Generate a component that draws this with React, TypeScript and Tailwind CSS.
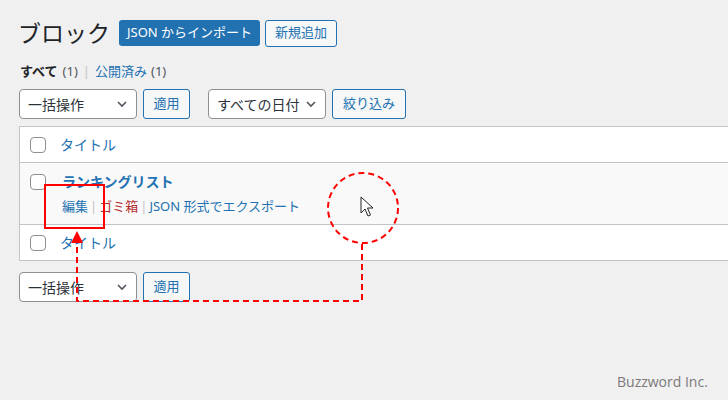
import React from "react";

const font = { fontFamily: '"Noto Sans", "Noto Sans CJK JP", sans-serif' };

function Chevron() {
  return (
    <svg width="12" height="12" viewBox="0 0 12 12" className="shrink-0">
      <path d="M2 4l4 4 4-4" fill="none" stroke="#50575e" strokeWidth="1.6" />
    </svg>
  );
}

function FakeSelect({ label, width }: { label: string; width: string }) {
  return (
    <div
      className={`${width} h-[30px] flex items-center justify-between pl-2 pr-2 border border-[#8c8f94] rounded-[4px] bg-white text-[14px] text-[#2c3338]`}
    >
      <span>{label}</span>
      <Chevron />
    </div>
  );
}

function SecondaryButton({ label, width }: { label: string; width: string }) {
  return (
    <div
      className={`${width} h-[30px] flex items-center justify-center border border-[#2271b1] rounded-[3px] bg-[#f6f7f7] text-[13px] text-[#2271b1]`}
    >
      {label}
    </div>
  );
}

function Checkbox() {
  return <div className="w-4 h-4 rounded-[4px] border border-[#8c8f94] bg-white shrink-0" />;
}

export default function App() {
  return (
    <div className="relative w-[728px] h-[400px] overflow-hidden bg-[#f0f0f1]" style={font}>
      <div className="pl-[19px] pt-[19px]">
        {/* heading */}
        <div className="flex items-center h-[28px]">
          <h1 className="text-[23px] text-[#1d2327] leading-none mr-[9px] -ml-[1px]">ブロック</h1>
          <div className="h-[26px] px-[8px] flex items-center rounded-[3px] bg-[#2271b1] text-white text-[13px] mr-[5px]">
            JSON からインポート
          </div>
          <div className="h-[27px] px-[9px] flex items-center rounded-[3px] border border-[#2271b1] bg-[#f6f7f7] text-[#2271b1] text-[13px]">
            新規追加
          </div>
        </div>

        {/* views */}
        <div className="mt-[15px] flex items-center text-[13px] h-[20px] pl-[1px]">
          <span className="font-bold text-[#1d2327]">すべて</span>
          <span className="ml-[5px] text-[#50575e]">(1)</span>
          <span className="mx-[5px] text-[#c3c4c7]">|</span>
          <span className="text-[#2271b1]">公開済み</span>
          <span className="ml-[4px] text-[#50575e]">(1)</span>
        </div>

        {/* filters */}
        <div className="mt-[7px] flex items-center">
          <FakeSelect label="一括操作" width="w-[118px]" />
          <div className="w-[6px]" />
          <SecondaryButton label="適用" width="w-[47px]" />
          <div className="w-[18px]" />
          <FakeSelect label="すべての日付" width="w-[118px]" />
          <div className="w-[6px]" />
          <SecondaryButton label="絞り込み" width="w-[74px]" />
        </div>

        {/* table */}
        <div className="mt-[7px] border border-r-0 border-[#c3c4c7] bg-white">
          <div className="h-[36px] flex items-center gap-[14px] pl-[10px] border-b border-[#c3c4c7] text-[14px] text-[#2271b1]">
            <Checkbox />
            <span>タイトル</span>
          </div>
          <div className="h-[62px] flex gap-[16px] pl-[10px] pt-[11px] bg-[#f9f9f9] border-b border-[#c3c4c7]">
            <Checkbox />
            <div className="flex flex-col">
              <span className="text-[14px] font-semibold text-[#2271b1] leading-[19px] -mt-[2px]">ランキングリスト</span>
              <div className="mt-[6px] flex items-center text-[13px] leading-[18px]">
                <span className="text-[#2271b1]">編集</span>
                <span className="mx-[2px] text-[#c3c4c7]">|</span>
                <span className="text-[#b32d2e]">ゴミ箱</span>
                <span className="mx-[2px] text-[#c3c4c7]">|</span>
                <span className="text-[#2271b1]">JSON 形式でエクスポート</span>
              </div>
            </div>
          </div>
          <div className="h-[35px] flex items-center gap-[14px] pl-[10px] text-[14px] text-[#2271b1]">
            <Checkbox />
            <span>タイトル</span>
          </div>
        </div>

        {/* bottom actions */}
        <div className="mt-[11px] flex items-center">
          <FakeSelect label="一括操作" width="w-[118px]" />
          <div className="w-[6px]" />
          <SecondaryButton label="適用" width="w-[47px]" />
        </div>
      </div>

      {/* annotations */}
      <svg className="absolute inset-0 pointer-events-none" width="728" height="400" viewBox="0 0 728 400">
        <rect x="45" y="185" width="59" height="43" fill="none" stroke="#ff0000" strokeWidth="2" />
        <circle cx="363" cy="208" r="35" fill="none" stroke="#ff0000" strokeWidth="2" strokeDasharray="6 4" />
        <path d="M362 244 V301 H77 V242" fill="none" stroke="#ff0000" strokeWidth="2" strokeDasharray="6 4" />
        <polygon points="77,231 71,243 83,243" fill="#ff0000" />
        <path
          d="M361 197 V213 L365 209 L368 216 L370.5 215 L367.5 208 L373 208 Z"
          fill="#fff"
          stroke="#222"
          strokeWidth="1"
          strokeLinejoin="round"
        />
      </svg>

      <div className="absolute left-[617px] top-[371px] text-[14px] text-[#7a7a7a]" style={{ fontFamily: '"Open Sans", sans-serif' }}>
        Buzzword Inc.
      </div>
    </div>
  );
}
